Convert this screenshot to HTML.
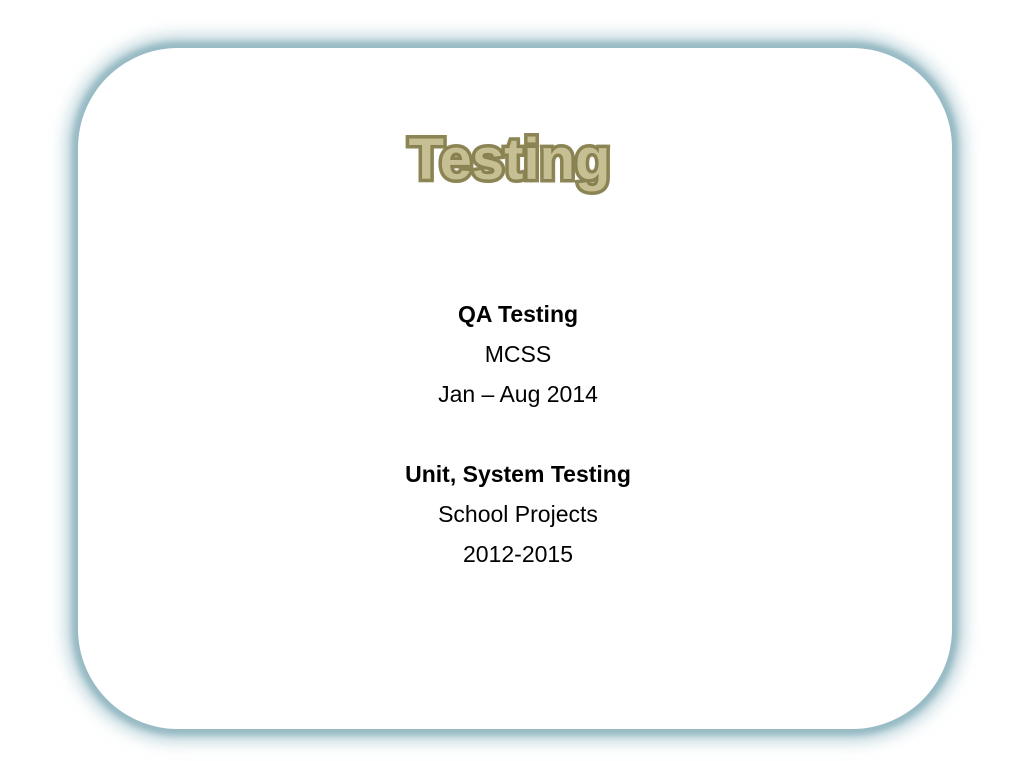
<!DOCTYPE html>
<html><head><style>
body{margin:0;width:1019px;height:761px;background:#fff;position:relative;overflow:hidden;font-family:"Liberation Sans",sans-serif}
.box{position:absolute;left:78px;top:48px;width:874px;height:681px;border-radius:100px;background:#fff;box-shadow:0 0 6px 6px #97bac4,0 0 16px 12px rgba(140,180,192,.6)}
.t{position:absolute;left:0;width:1019px;text-align:center;top:126px;font-size:58px;font-weight:bold;color:#c7bf94;-webkit-text-stroke:7px #8e8757;paint-order:stroke fill;letter-spacing:0px;text-shadow:0 0 5px rgba(120,110,60,.6)}
.c{position:absolute;left:0;width:1036px;text-align:center;font-size:23px;color:#000;line-height:40px}
</style></head><body>
<div class="box"></div>
<div class="t">Testing</div>
<div class="c" style="top:294px"><b>QA Testing</b><br>MCSS<br>Jan – Aug 2014<br><br><b>Unit, System Testing</b><br>School Projects<br>2012-2015</div>
</body></html>
